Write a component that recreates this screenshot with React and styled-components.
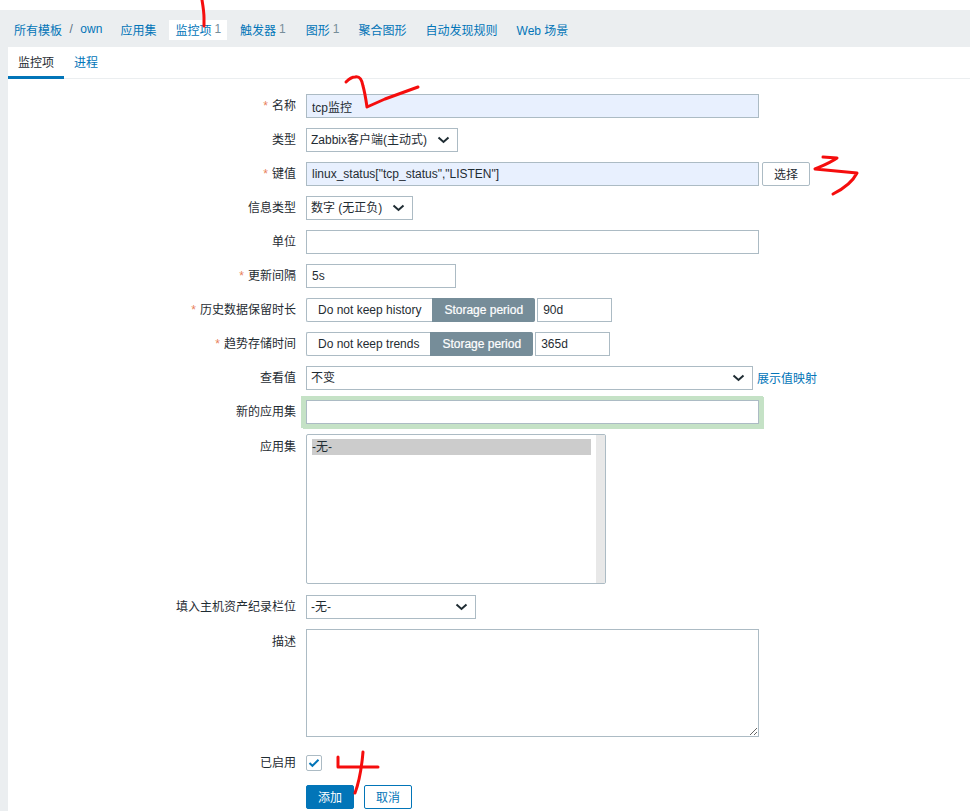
import React from 'react';
import styled, { createGlobalStyle } from 'styled-components';

const GlobalStyle = createGlobalStyle`
  html, body {
    margin: 0;
    padding: 0;
    background: #fff;
  }
  body {
    font-family: "Liberation Sans", "Noto Sans CJK SC", Arial, sans-serif;
    font-size: 12px;
    color: #1f2c33;
  }
`;

const Page = styled.div`
  position: relative;
  width: 970px;
  height: 811px;
  padding-top: 10px;
  box-sizing: border-box;
  overflow: hidden;
  background: #ebeef0;
  box-shadow: inset 0 10px 0 #fff;
`;

const Nav = styled.ul`
  display: flex;
  align-items: flex-start;
  height: 37px;
  margin: 0;
  padding: 10px 0 0 8px;
  list-style: none;
  box-sizing: border-box;
`;

const NavItem = styled.li`
  display: flex;
  align-items: center;
  height: 20px;
  box-sizing: border-box;
  margin-right: ${p => p.$gap ?? 7}px;
  padding: 0 6px 2px;
  background: ${p => (p.$active ? '#fff' : 'transparent')};
  color: #0275b8;
  white-space: pre;
`;

const Slash = styled.span`
  margin: 0 7.5px;
  color: #5c7080;
`;

const Count = styled.span`
  margin-left: 3px;
  color: #768d99;
`;

const Panel = styled.div`
  margin-left: 8px;
  height: 764px;
  background: #fff;
`;

const Tabs = styled.div`
  display: flex;
  height: 32px;
  box-sizing: border-box;
  border-bottom: 1px solid #ebeef0;
`;

const Tab = styled.div`
  height: 32px;
  box-sizing: border-box;
  padding: 9px 10px 0;
  line-height: 14px;
  color: ${p => (p.$active ? '#1f2c33' : '#0275b8')};
  border-bottom: 3px solid ${p => (p.$active ? '#0275b8' : 'transparent')};
`;

const Form = styled.div`
  display: flex;
  flex-direction: column;
  padding-top: 15px;
`;

const Row = styled.div`
  display: grid;
  grid-template-columns: 288px 1fr;
  column-gap: 10px;
  margin-bottom: ${p => p.$after ?? 10}px;
`;

const Label = styled.div`
  padding-top: ${p => p.$top ?? 5}px;
  line-height: 14px;
  text-align: right;
  white-space: nowrap;
`;

const Star = styled.span`
  margin-right: 4px;
  color: #e8815c;
`;

const Field = styled.div`
  display: flex;
  align-items: flex-start;
`;

const Input = styled.input`
  display: block;
  width: ${p => p.$width}px;
  height: 24px;
  box-sizing: border-box;
  margin: 0;
  padding: 0 5px;
  border: 1px solid #acbbc4;
  border-radius: 0;
  outline: none;
  background: ${p => (p.$filled ? '#e8f0fe' : '#fff')};
  color: #1f2c33;
  font: inherit;
`;

const HighlightInput = styled(Input)`
  box-shadow: 0 0 0 4px #c5e2c6, 1px 1px 0 4px #c5e2c6, -1px 0 0 4px #c5e2c6;
`;

const Select = styled.div`
  display: flex;
  align-items: center;
  justify-content: space-between;
  width: ${p => p.$width}px;
  height: 24px;
  box-sizing: border-box;
  padding: 0 7px 0 4px;
  border: 1px solid #acbbc4;
  background: #fff;
  white-space: nowrap;
`;

const SelectText = styled.span`
  margin-bottom: 3px;
`;

const Button = styled.button`
  width: 48px;
  height: 24px;
  margin: 0 0 0 ${p => p.$left ?? 0}px;
  padding: 0 0 2px;
  box-sizing: border-box;
  border: 1px solid ${p => (p.$outline || p.$primary ? '#0275b8' : '#acbbc4')};
  border-radius: 2px;
  background: ${p => (p.$primary ? '#0275b8' : '#fff')};
  color: ${p => (p.$primary ? '#fff' : p.$outline ? '#0275b8' : '#1f2c33')};
  font: inherit;
`;

const Segmented = styled.div`
  display: flex;
  height: 24px;
  margin-right: 2px;
  box-sizing: border-box;
  border-radius: 2px;
`;

const Segment = styled.div`
  display: flex;
  align-items: center;
  padding: 0 11px 0 ${p => (p.$on ? 12 : 11)}px;
  border: 1px solid ${p => (p.$on ? '#768d99' : '#acbbc4')};
  border-width: ${p => (p.$on ? '1px 1px 1px 0' : '1px 0 1px 1px')};
  border-radius: ${p => (p.$on ? '0 2px 2px 0' : '2px 0 0 2px')};
  background: ${p => (p.$on ? '#768d99' : '#fff')};
  color: ${p => (p.$on ? '#fff' : '#1f2c33')};
  white-space: nowrap;
  -webkit-text-stroke: ${p => (p.$on ? '0.2px #fff' : '0')};
`;

const TextLink = styled.span`
  align-self: center;
  margin-left: 4px;
  margin-bottom: 1px;
  color: #0275b8;
`;

const ListBox = styled.div`
  position: relative;
  width: 300px;
  height: 150px;
  box-sizing: border-box;
  padding: 4px 14px 0 5px;
  border: 1px solid #acbbc4;
  border-radius: 2px;
`;

const ListOption = styled.div`
  height: 16px;
  line-height: 17px;
  background: #cccccc;
`;

const ScrollTrack = styled.div`
  position: absolute;
  top: 0;
  right: 0;
  bottom: 0;
  width: 9px;
  background: #e8e8e8;
`;

const TextArea = styled.textarea`
  display: block;
  width: 453px;
  height: 108px;
  margin: 0;
  padding: 5px;
  box-sizing: border-box;
  border: 1px solid #acbbc4;
  border-radius: 0;
  outline: none;
  font: inherit;
`;

const CheckBox = styled.div`
  display: flex;
  align-items: center;
  justify-content: center;
  width: 16px;
  height: 16px;
  box-sizing: border-box;
  border: 1px solid #acbbc4;
  border-radius: 2px;
  background: #fff;
`;

const Scribbles = styled.svg`
  position: absolute;
  top: 0;
  left: 0;
  pointer-events: none;
`;

const Stroke = styled.path`
  fill: none;
  stroke: #f50d0d;
  stroke-width: 3;
  stroke-linecap: round;
  stroke-linejoin: round;
`;

const Chevron = () => (
  <svg width="13" height="8" viewBox="0 0 13 8">
    <path d="M1.5 1.5 L6.5 6 L11.5 1.5" fill="none" stroke="#1f2c33" strokeWidth="2" />
  </svg>
);

const FormRow = ({ label, required, after, top, children }) => (
  <Row $after={after}>
    <Label $top={top}>
      {required && <Star>*</Star>}
      {label}
    </Label>
    <Field>{children}</Field>
  </Row>
);

const navItems = [
  { text: '应用集' },
  { text: '监控项', count: 1, active: true },
  { text: '触发器', count: 1, gap: 8 },
  { text: '图形', count: 1 },
  { text: '聚合图形' },
  { text: '自动发现规则' },
  { text: 'Web 场景' },
];

export default function App() {
  return (
    <Page>
      <GlobalStyle />
      <Nav>
        <NavItem $gap={6}>
          所有模板<Slash>/</Slash>own
        </NavItem>
        {navItems.map(item => (
          <NavItem key={item.text} $active={item.active} $gap={item.gap}>
            {item.text}
            {item.count && <Count>{item.count}</Count>}
          </NavItem>
        ))}
      </Nav>
      <Panel>
        <Tabs>
          <Tab $active>监控项</Tab>
          <Tab>进程</Tab>
        </Tabs>
        <Form>
          <FormRow label="名称" required>
            <Input $width={453} $filled readOnly value="tcp监控" />
          </FormRow>
          <FormRow label="类型">
            <Select $width={152}>
              <SelectText>Zabbix客户端(主动式)</SelectText>
              <Chevron />
            </Select>
          </FormRow>
          <FormRow label="键值" required>
            <Input $width={453} $filled readOnly value={'linux_status["tcp_status","LISTEN"]'} />
            <Button $left={3}>选择</Button>
          </FormRow>
          <FormRow label="信息类型">
            <Select $width={107}>
              <SelectText>数字 (无正负)</SelectText>
              <Chevron />
            </Select>
          </FormRow>
          <FormRow label="单位">
            <Input $width={453} readOnly value="" />
          </FormRow>
          <FormRow label="更新间隔" required>
            <Input $width={150} readOnly value="5s" />
          </FormRow>
          <FormRow label="历史数据保留时长" required>
            <Segmented>
              <Segment>Do not keep history</Segment>
              <Segment $on>Storage period</Segment>
            </Segmented>
            <Input $width={75} readOnly value="90d" />
          </FormRow>
          <FormRow label="趋势存储时间" required>
            <Segmented>
              <Segment>Do not keep trends</Segment>
              <Segment $on>Storage period</Segment>
            </Segmented>
            <Input $width={75} readOnly value="365d" />
          </FormRow>
          <FormRow label="查看值">
            <Select $width={447}>
              <SelectText>不变</SelectText>
              <Chevron />
            </Select>
            <TextLink>展示值映射</TextLink>
          </FormRow>
          <FormRow label="新的应用集">
            <HighlightInput $width={453} readOnly value="" />
          </FormRow>
          <FormRow label="应用集" after={11} top={6}>
            <ListBox>
              <ListOption>-无-</ListOption>
              <ScrollTrack />
            </ListBox>
          </FormRow>
          <FormRow label="填入主机资产纪录栏位">
            <Select $width={170}>
              <SelectText>-无-</SelectText>
              <Chevron />
            </Select>
          </FormRow>
          <FormRow label="描述" after={18} top={6}>
            <TextArea readOnly value="" />
          </FormRow>
          <FormRow label="已启用" after={14} top={1}>
            <CheckBox>
              <svg width="12" height="10" viewBox="0 0 12 10">
                <path d="M1.5 5 L4.4 7.8 L10.5 1.8" fill="none" stroke="#0275b8" strokeWidth="2" />
              </svg>
            </CheckBox>
          </FormRow>
          <Row>
            <span />
            <Field>
              <Button $primary>添加</Button>
              <Button $outline $left={10}>取消</Button>
            </Field>
          </Row>
        </Form>
      </Panel>
      <Scribbles width="970" height="811" viewBox="0 0 970 811">
        <Stroke d="M202 0 C203 6 204 12 204 18 L204 26" />
        <Stroke d="M346 82 C349 79 352 77 355 77 C360 76 362 80 363 86 C365 93 366 100 367 107 L385 99 L418 87" />
        <Stroke d="M823 157 L837 158 C830 163 822 166 815 169 L857 173 C853 181 845 188 833 194" />
        <Stroke d="M338 757 L338 767 L378 767" />
        <Stroke d="M363 752 C362 762 361 777 355 793" />
      </Scribbles>
    </Page>
  );
}
